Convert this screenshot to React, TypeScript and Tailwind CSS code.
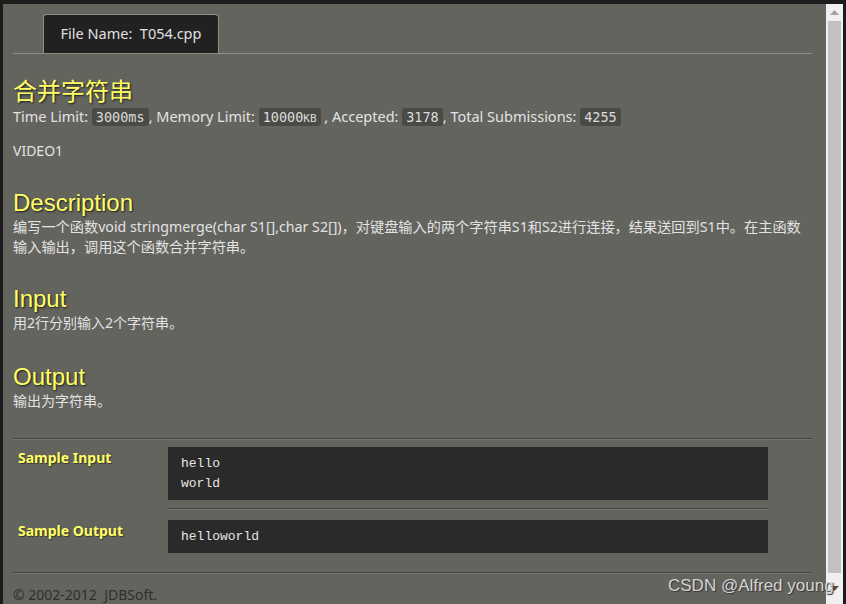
const sans = "font-['Noto_Sans','Noto_Sans_CJK_SC',sans-serif]";
const heading =
  "font-['Liberation_Sans','Noto_Sans_CJK_SC',sans-serif] text-[24px] leading-[29px] text-[#ffff66] [text-shadow:1px_1px_2px_#1a1a1a]";

const Badge = ({ children }: { children: React.ReactNode }) => (
  <span className="rounded-[3px] bg-[#4a4a46] px-[4px] py-[1px] font-['DejaVu_Sans_Mono',monospace] text-[13.5px] text-[#dcdcdc]">
    {children}
  </span>
);

const Rule = ({ light }: { light?: boolean }) => (
  <div
    className={
      light
        ? "h-[2px] border-t border-[#8e8e89]"
        : "h-[2px] border-t border-b border-t-[#43433f] border-b-[#75756f]"
    }
  />
);

const App = () => {
  return (
    <div className={`relative h-[604px] w-[846px] overflow-hidden bg-[#1c1c1c] pt-[4px] pl-[3px] pr-[3px] ${sans}`}>
      <div className="flex h-[600px]">
        {/* Page */}
        <div className="flex-1 overflow-hidden bg-[#64645f] pl-[10px] pr-[14px] pt-[10px] text-[#e2e2e2]">
          {/* Tab */}
          <div className="pl-[30px]">
            <div className="flex h-[39px] w-[176px] items-center justify-center rounded-t-[4px] border border-b-0 border-[#8e8e89] bg-[#212121] text-[14.5px] text-[#e0e0e0]">
              File Name:&nbsp;&nbsp;T054.cpp
            </div>
          </div>
          <Rule light />

          <h1 className={`${heading} mt-[22px]`}>合并字符串</h1>
          <p className="text-[14.5px] leading-[20px]">
            Time Limit: <Badge>3000ms</Badge>, Memory Limit:{" "}
            <Badge>10000<span className="text-[11px]">KB</span></Badge> , Accepted: <Badge>3178</Badge>, Total
            Submissions: <Badge>4255</Badge>
          </p>
          <p className="mt-[12px] text-[14px] leading-[20px]">VIDEO1</p>

          <h2 className={`${heading} mt-[27px]`}>Description</h2>
          <p className="text-[14.2px] leading-[20px]">
            编写一个函数void stringmerge(char S1[],char S2[])，对键盘输入的两个字符串S1和S2进行连接，结果送回到S1中。在主函数输入输出，调用这个函数合并字符串。
          </p>

          <h2 className={`${heading} mt-[27px]`}>Input</h2>
          <p className="text-[14px] leading-[20px]">用2行分别输入2个字符串。</p>

          <h2 className={`${heading} mt-[29px]`}>Output</h2>
          <p className="text-[14px] leading-[20px]">输出为字符串。</p>

          <div className="mt-[27px]">
            <Rule />
          </div>

          {/* Samples */}
          <div className="mt-[7px] flex">
            <div className="w-[155px] pl-[5px] pt-[1px] text-[14px] font-bold leading-[20px] text-[#ffff66] [text-shadow:1px_1px_1px_#333]">
              Sample Input
            </div>
            <div className="w-[600px]">
              <pre className="bg-[#2a2a2a] px-[13px] pt-[7px] pb-[6px] font-['Liberation_Mono',monospace] text-[13px] leading-[20px] text-[#e6e6e6]">
                hello{"\n"}world
              </pre>
              <div className="mt-[8px]">
                <Rule />
              </div>
            </div>
          </div>
          <div className="mt-[10px] flex">
            <div className="w-[155px] pl-[5px] pt-[1px] text-[14px] font-bold leading-[20px] text-[#ffff66] [text-shadow:1px_1px_1px_#333]">
              Sample Output
            </div>
            <pre className="w-[600px] bg-[#2a2a2a] px-[13px] pt-[7px] pb-[6px] font-['Liberation_Mono',monospace] text-[13px] leading-[20px] text-[#e6e6e6]">
              helloworld
            </pre>
          </div>

          <div className="mt-[19px]">
            <Rule />
          </div>
          <p className="mt-[11px] text-[14px] leading-[20px] text-[#2e2e2c]">© 2002-2012&nbsp;&nbsp;JDBSoft.</p>
        </div>

        {/* Scrollbar */}
        <div className="flex w-[17px] flex-col items-center bg-[#f0f0f0]">
          <div className="flex h-[17px] items-center justify-center">
            <svg width="9" height="5" viewBox="0 0 9 5">
              <path d="M0 5 L4.5 0 L9 5 Z" fill="#a3a3a3" />
            </svg>
          </div>
          <div className="mx-[2px] h-[552px] w-[13px] bg-[#c1c1c1]" />
          <div className="flex flex-1 items-center justify-center">
            <svg width="9" height="5" viewBox="0 0 9 5">
              <path d="M0 0 L4.5 5 L9 0 Z" fill="#505050" />
            </svg>
          </div>
        </div>
      </div>

      {/* Watermark */}
      <div className="absolute left-[668px] top-[573px] font-['Liberation_Sans',sans-serif] text-[17px] text-[#d4d4d4] [text-shadow:1px_1px_1px_#333]">
        CSDN @Alfred young
      </div>
    </div>
  );
};

export default App;
